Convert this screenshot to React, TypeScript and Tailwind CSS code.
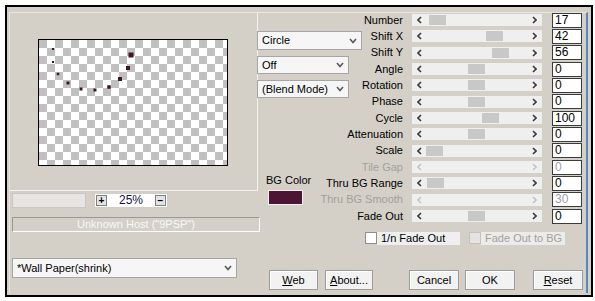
import React from 'react';

type Row = {
  label: string;
  value: string;
  thumb: number | null;
  row: string;
  disabled?: boolean;
};

const ROWS: Row[] = [
  { label: 'Number', value: '17', thumb: 17, row: 'row-start-1' },
  { label: 'Shift X', value: '42', thumb: 74, row: 'row-start-2' },
  { label: 'Shift Y', value: '56', thumb: 80, row: 'row-start-3' },
  { label: 'Angle', value: '0', thumb: 56, row: 'row-start-4' },
  { label: 'Rotation', value: '0', thumb: 56, row: 'row-start-5' },
  { label: 'Phase', value: '0', thumb: 56, row: 'row-start-6' },
  { label: 'Cycle', value: '100', thumb: 70, row: 'row-start-7' },
  { label: 'Attenuation', value: '0', thumb: 56, row: 'row-start-8' },
  { label: 'Scale', value: '0', thumb: 14, row: 'row-start-9' },
  { label: 'Tile Gap', value: '0', thumb: null, row: 'row-start-10', disabled: true },
  { label: 'Thru BG Range', value: '0', thumb: 15, row: 'row-start-11' },
  { label: 'Thru BG Smooth', value: '30', thumb: null, row: 'row-start-12', disabled: true },
  { label: 'Fade Out', value: '0', thumb: 56, row: 'row-start-13' },
];

// dots on the preview, relative to the preview's inner area
const DOTS = [
  [14, 9, 2], [14, 22, 2], [19, 34, 2.5], [29, 43, 3], [42, 49, 3],
  [56, 50, 3], [70, 47, 3.5], [81, 39, 4], [89, 28, 4], [92, 15, 5],
];

const Chevron = ({ color = '#5a5a5a' }: { color?: string }) => (
  <svg width="8" height="6" viewBox="0 0 8 6">
    <path d="M1 1 L4 4.5 L7 1" fill="none" stroke={color} strokeWidth="1.6" />
  </svg>
);

const Arrow = ({ dir, color }: { dir: 'l' | 'r'; color: string }) => (
  <svg width="5" height="8" viewBox="0 0 5 8">
    <path d={dir === 'l' ? 'M4 1 L1 4 L4 7' : 'M1 1 L4 4 L1 7'} fill="none" stroke={color} strokeWidth="1.6" />
  </svg>
);

const Dropdown: React.FC<{ label: string; className: string }> = ({ label, className }) => (
  <div className={`flex items-center justify-between bg-[#f6f6f6] border border-[#a6a6a6] pl-[4px] pr-[4px] ${className}`}>
    <span>{label}</span>
    <Chevron />
  </div>
);

const Button: React.FC<{ className: string; children: React.ReactNode }> = ({ className, children }) => (
  <div className={`h-[20px] flex items-center justify-center bg-[#f2f2f2] border border-[#9c9c9c] shadow-[inset_1px_1px_0_#ffffff] ${className}`}>
    {children}
  </div>
);

export default function App() {
  return (
    <div className="w-[595px] h-[301px] bg-white pl-[5px] pt-[5px] pr-[2px] pb-[4px] font-['Liberation_Sans',Arial,sans-serif] text-[11px] leading-[13px] text-black">
      <div className="h-full border-2 border-black bg-[#d4d0c8] pt-[5px] pl-[2px] pr-[3px] pb-[2px]">
        <div className="h-full flex border-t border-l border-t-[#e8e6e1] border-l-[#e8e6e1] border-r-2 border-r-[#5b88ba]">
          {/* Left column: preview and host info */}
          <div className="w-[248px] shrink-0 flex flex-col">
            <div className="h-[178px] border-r border-b border-r-[#f3f2ef] border-b-[#f3f2ef]">
              <div className="ml-[28px] mt-[26px] w-[190px] h-[127px] border border-black bg-[conic-gradient(#ffffff_25%,#c0c0c0_0_50%,#ffffff_0_75%,#c0c0c0_0)] bg-[length:16px_16px]">
                <svg width="188" height="125" viewBox="0 0 188 125">
                  {DOTS.map(([x, y, s], i) => (
                    <rect key={i} x={x - s / 2} y={y - s / 2} width={s} height={s} fill="#3c1729" />
                  ))}
                </svg>
              </div>
            </div>

            <div className="mt-[2px] ml-[2px] flex items-center h-[15px]">
              <div className="w-[74px] h-[15px] bg-[#e6e5e2] border border-[#c9c7c2]" />
              <div className="ml-[8px] w-[74px] h-[15px] bg-white border border-[#cfcdc8] flex items-center px-[1px]">
                <div className="w-[11px] h-[11px] bg-[#e4e4e4] border border-[#808080] flex items-center justify-center text-[10px] font-bold leading-none">+</div>
                <div className="flex-1 text-center text-[12px] text-[#10104a]">25%</div>
                <div className="w-[11px] h-[11px] bg-[#e4e4e4] border border-[#808080] flex items-center justify-center text-[10px] font-bold leading-none">−</div>
              </div>
            </div>

            <div className="mt-[9px] ml-[2px] w-[248px] h-[15px] shrink-0 border border-t-[#9d9a93] border-l-[#9d9a93] border-b-white border-r-white flex items-center justify-center text-[#f7f7f7]">
              Unknown Host ("9PSP")
            </div>

            <Dropdown label="*Wall Paper(shrink)" className="mt-[26px] ml-[2px] w-[225px] h-[20px]" />
          </div>

          {/* Right column: parameters */}
          <div className="flex-1 flex flex-col">
            <div className="-mt-[1px] grid grid-cols-[154px_140px_30px] grid-rows-[repeat(13,16.33px)]">
              <div className="col-start-1 row-start-1 row-span-13 self-start flex flex-col items-start">
                <Dropdown label="Circle" className="mt-[19px] -ml-[1px] w-[105px] h-[19px]" />
                <Dropdown label="Off" className="mt-[6px] -ml-[1px] w-[92px] h-[18px]" />
                <Dropdown label="(Blend Mode)" className="mt-[6px] -ml-[1px] w-[92px] h-[18px]" />
                <div className="mt-[76px] ml-[8px]">BG Color</div>
                <div className="mt-[3px] ml-[10px] w-[35px] h-[15px] bg-[#4c1534] border border-[#f2f1ee]" />
              </div>

              {ROWS.map((r) => (
                <React.Fragment key={r.label}>
                  <div className={`col-start-1 ${r.row} justify-self-end self-center pr-[9px] ${r.disabled ? 'text-[#a3a09a]' : ''}`}>
                    {r.label}
                  </div>
                  <div className={`col-start-2 ${r.row} self-center`}>
                    <div className="relative w-[130px] h-[12px] bg-[#efefef] flex items-center justify-between px-[5px]">
                      <Arrow dir="l" color={r.disabled ? '#c4c4c4' : '#3a3a3a'} />
                      {r.thumb !== null && (
                        <div className="absolute top-[1px] w-[17px] h-[10px] bg-[#c8c8c8]" style={{ left: r.thumb }} />
                      )}
                      <Arrow dir="r" color={r.disabled ? '#c4c4c4' : '#3a3a3a'} />
                    </div>
                  </div>
                  <div className={`col-start-3 ${r.row} self-center w-[30px] h-[15px] bg-white border border-[#3c3c3c] pl-[2px] text-[12px] leading-[13px] ${r.disabled ? 'text-[#a0a0a0]' : 'text-black'}`}>
                    {r.value}
                  </div>
                </React.Fragment>
              ))}
            </div>

            <div className="mt-[8px] flex items-center h-[12px]">
              <div className="ml-[107px] w-[12px] h-[12px] bg-white border border-[#8e8e8e]" />
              <div className="w-[83px] h-[13px] bg-[#efefef] pl-[4px] flex items-center">1/n Fade Out</div>
              <div className="ml-[9px] w-[12px] h-[12px] bg-[#e4e3e0] border border-[#c4c2bd]" />
              <div className="w-[84px] h-[13px] bg-[#ebebea] pl-[4px] flex items-center text-[#a3a09a]">Fade Out to BG</div>
            </div>

            <div className="mt-[26px] flex items-center">
              <Button className="ml-[11px] w-[49px]"><span><span className="underline">W</span>eb</span></Button>
              <Button className="ml-[7px] w-[48px]"><span><span className="underline">A</span>bout...</span></Button>
              <Button className="ml-[36px] w-[50px]">Cancel</Button>
              <Button className="ml-[6px] w-[50px]">OK</Button>
              <Button className="ml-[18px] w-[50px]"><span><span className="underline">R</span>eset</span></Button>
            </div>
          </div>
        </div>
      </div>
    </div>
  );
}
